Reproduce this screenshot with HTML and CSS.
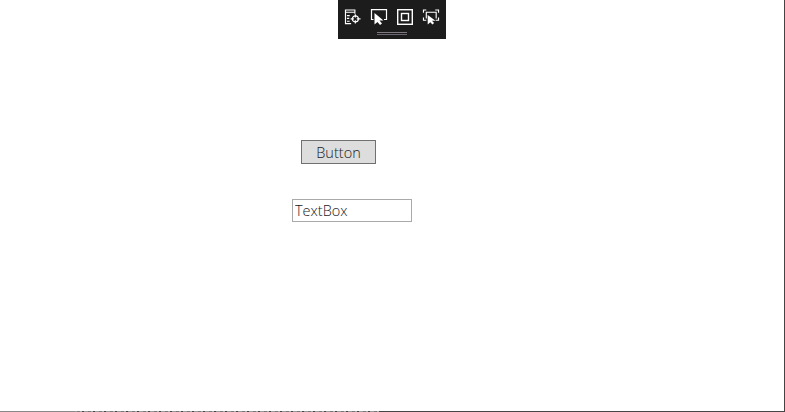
FILE: index.html
```html
<!DOCTYPE html>
<html lang="en">
    <head>
        <meta charset="UTF-8" />
        <title>App</title>
        <link rel="stylesheet" href="styles.css">
    </head>
    <body>
        <div class="window">
            <div class="debug-bar">
                <div class="tools">
                    <svg class="tool" viewBox="0 0 17 16" fill="none" stroke="#fff" stroke-width="1.2">
                        <path d="M6.500 15h-6v-14.400h10v4M0.500 3h10" />
                        <path d="M2 6.500h3M2 9.500h2.500M2 12.500h3" />
                        <circle cx="11" cy="10" r="3.200" />
                        <path d="M11 5v3.500M11 11.500v3.500M6 10h3.500M12.500 10h4" />
                    </svg>
                    <svg class="tool" viewBox="0 0 16 16" fill="none" stroke="#fff" stroke-width="1.2">
                        <path d="M2.500 10.500h-2v-9.900h15v9.900h-2.500" />
                        <path d="M3.500 4v11.500l3-2.500 2.500 3 2-1.500-2.500-3h4z" fill="#fff" stroke="none" />
                    </svg>
                    <svg class="tool" viewBox="0 0 16 16" fill="none" stroke="#fff" stroke-width="1.4">
                        <rect x="0.700" y="0.700" width="14.600" height="14.600" />
                        <rect x="4.500" y="4.500" width="7" height="7" />
                    </svg>
                    <svg class="tool" viewBox="0 0 17 16" fill="none" stroke="#fff" stroke-width="1.2">
                        <path d="M0.500 3.500v-3h3M13 0.500h3.500v3M0.500 8.500v3h3M16.500 8.500v3h-3" />
                        <path d="M3.500 9.500v-6.500h10.500v6.500" />
                        <path d="M5 6v10l2.800-2.500 2.200 2.500 1.800-1.500-2.300-2.500h3.800z" fill="#fff" stroke="none" />
                    </svg>
                </div>
                <div class="grip"></div>
            </div>
            <div class="content">
                <button class="btn">Button</button>
                <input class="textbox" type="text" value="TextBox" />
            </div>
            <div class="bottom-edge"></div>
        </div>
    </body>
</html>
```

FILE: styles.css
```css
html, body {
  margin: 0;
  height: 100%;
  overflow: hidden;
  background: #fff;
}

.window {
  box-sizing: border-box;
  height: 412px;
  width: 785px;
  border-right: 1px solid #444;
  display: flex;
  flex-direction: column;
  align-items: center;
  font-family: "Open Sans", "Noto Sans", sans-serif;
}

.debug-bar {
  width: 108px;
  height: 39px;
  background: #1c1c1c;
  display: flex;
  flex-direction: column;
  align-items: center;
}

.tools {
  display: flex;
  gap: 10px;
  height: 16px;
  padding-top: 9px;
  margin-bottom: 7px;
}

.tool {
  width: 16px;
  height: 16px;
  overflow: visible;
}

.grip {
  width: 30px;
  height: 3px;
  border-top: 1px solid #7f7a80;
  border-bottom: 1px solid #6a6570;
  box-sizing: border-box;
}

.content {
  flex: 1;
  width: 100%;
  display: flex;
  flex-direction: column;
  align-items: flex-start;
}

.btn {
  margin: 101px 0 0 301px;
  width: 75px;
  height: 24px;
  padding: 0;
  background: #ddd;
  border: 1px solid #707070;
  color: #1a1a1a;
  font-family: inherit;
  font-size: 14.500px;
  font-weight: 300;
}

.textbox {
  box-sizing: border-box;
  margin: 35px 0 0 292px;
  width: 120px;
  height: 23px;
  padding: 0 2px;
  background: #fff;
  border: 1px solid #a9a9a9;
  color: #1a1a1a;
  font-family: inherit;
  font-size: 14.500px;
  font-weight: 300;
  outline: none;
}

.bottom-edge {
  width: 100%;
  height: 1px;
  background:
    linear-gradient(90deg, #888 0 75px, transparent 75px 380px, #444 380px),
    repeating-linear-gradient(90deg, #777 0 3px, #aaa 3px 5px, #444 5px 7px, #999 7px 11px);
}
```
